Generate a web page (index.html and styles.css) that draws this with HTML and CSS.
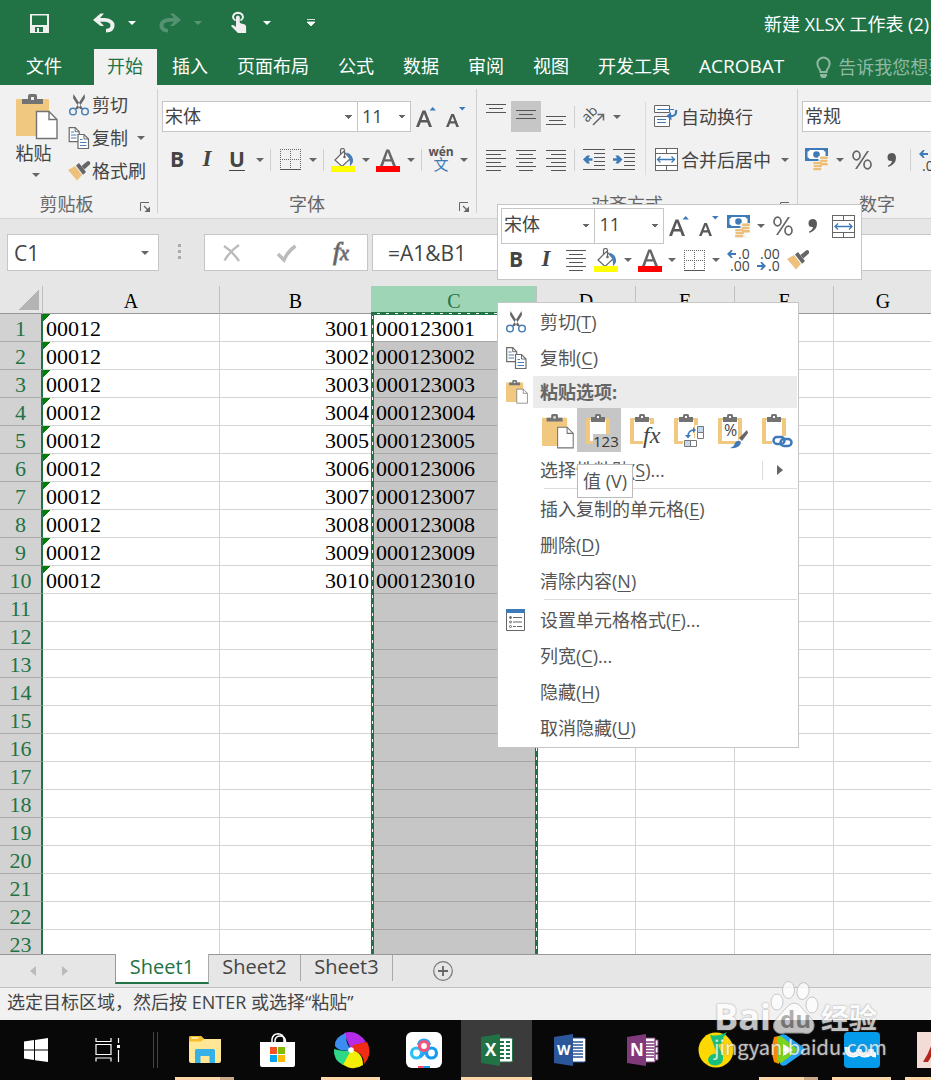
FILE: index.html
```html
<!DOCTYPE html>
<html lang="zh-CN">
<head>
<meta charset="utf-8">
<title>新建 XLSX 工作表 (2) - Excel</title>
<link rel="stylesheet" href="styles.css">
</head>
<body>
<svg class="defs" aria-hidden="true">
  <symbol id="paste" viewBox="0 0 42 46">
    <rect y="5" width="33" height="37" rx="1" fill="#f0c880"/>
    <path d="M6 10V5h6V2q0-2 2-2h5q2 0 2 2v3h6v5z" fill="#737373"/><rect x="15" y="3" width="3" height="3" fill="#f0f0f0"/>
    <path d="M20.500 17.500h12.500l8 8v19h-20.500z" fill="#fff" stroke="#737373" stroke-width="1.400"/><path d="M33 17.500v8h8" fill="none" stroke="#737373" stroke-width="1.400"/>
  </symbol>
  <symbol id="cut" viewBox="0 0 20 22">
    <path d="M4.500 0L14 15h-3L4 4zM15.500 0L6 15h3L16 4z" fill="#666"/>
    <circle cx="4" cy="17.500" r="3.300" fill="none" stroke="#4a7fb5" stroke-width="1.500"/><circle cx="16" cy="17.500" r="3.300" fill="none" stroke="#4a7fb5" stroke-width="1.500"/>
  </symbol>
  <symbol id="copy" viewBox="0 0 21 22">
    <path d="M.7.700h6l4 4v10H.7z" fill="#fff" stroke="#6a6a6a" stroke-width="1.200"/><path d="M6.700.700v4h4" fill="none" stroke="#6a6a6a"/><path d="M2.500 5h3M2.500 8h5.500M2.500 11h5.500" fill="none" stroke="#4a7fb5"/>
    <path d="M9.500 7.500h6l4.500 4.500v9.500H9.500z" fill="#fff" stroke="#6a6a6a" stroke-width="1.200"/><path d="M15.500 7.500v4.500H20" fill="none" stroke="#6a6a6a"/><path d="M11.500 12.500h2.500M11.500 15.500h6.500M11.500 18.500h6.500" stroke="#4a7fb5"/>
  </symbol>
  <symbol id="brush" viewBox="0 0 22 20">
    <path d="M0 9l7-4 7 9-5 5.500z" fill="#edc17c"/><path d="M8 4.500l3-2.500 7 9-3 2.700z" fill="#666"/><path d="M13.500 5L19 .500q1.700-1 2.800.500t-.3 2.800L16.300 8.500z" fill="#666"/>
  </symbol>
  <symbol id="growfont" viewBox="0 0 20 22"><path d="M0 21L6.500 4.500h3L16 21h-3l-1.700-4.500H4.700L3 21zM5.600 14h4.800L8 7.500z" fill="#595959"/><path d="M13.500 4.500L16.700 1l3.200 3.500z" fill="#3f7ab8"/></symbol>
  <symbol id="shrinkfont" viewBox="0 0 20 22"><path d="M0 21L5.300 8h2.600L13 21h-2.700L9 17.500H4L2.600 21zM4.700 15.200h3.700L6.600 10.500z" fill="#595959"/><path d="M13 1h6.600l-3.300 3.500z" fill="#3f7ab8"/></symbol>
  <symbol id="border" viewBox="0 0 21 21"><path d="M.5 0v20M20.500 0v20M10.500 0v20M0 .5h21M0 10.500h21" stroke="#666" stroke-dasharray="1 1" shape-rendering="crispEdges"/><path d="M0 20.500h21" stroke="#555" shape-rendering="crispEdges"/></symbol>
  <symbol id="fill" viewBox="0 0 24 24">
    <path d="M4 12L12.500 3.500l7 7L11 18.500z" fill="#fff" stroke="#666" stroke-width="1.200"/><path d="M9.500 7V2.500q0-2 2-2t2 2V8" fill="none" stroke="#666" stroke-width="1.200"/><circle cx="13.500" cy="9" r="1.300" fill="#666"/>
    <path d="M15.500 4.500q7 2 6.500 9.500l-2.500 4q-1-1-.5-4-.5-4-3.500-7z" fill="#4a7fb5"/><rect y="18" width="24" height="6" fill="#ff0"/>
  </symbol>
  <symbol id="fontcolor" viewBox="0 0 24 24"><path d="M4 18L10.300 1.500h2.900L20 18h-3l-1.700-4.500H8.500L7 18zM9.300 11.200h5.100L11.800 4z" fill="#666"/><rect y="18" width="24" height="6" fill="red"/></symbol>
  <symbol id="center" viewBox="0 0 20 22"><path d="M0 1.500h20M3 5.500h14M0 9.500h20M3 13.500h14M0 17.500h20M3 21.500h14" stroke="#555" shape-rendering="crispEdges"/></symbol>
  <symbol id="left" viewBox="0 0 20 22"><path d="M0 1.500h20M0 5.500h15M0 9.500h20M0 13.500h15M0 17.500h20M0 21.500h15" stroke="#555" shape-rendering="crispEdges"/></symbol>
  <symbol id="right" viewBox="0 0 20 22"><path d="M0 1.500h20M5 5.500h15M0 9.500h20M5 13.500h15M0 17.500h20M5 21.500h15" stroke="#555" shape-rendering="crispEdges"/></symbol>
  <symbol id="indent" viewBox="0 0 23 22"><path d="M0 .5h22M11 4.500h11M11 8.500h11M11 12.500h11M11 16.500h11M0 20.500h22" stroke="#555" shape-rendering="crispEdges"/><path d="M0 9.200h4L2.500 6.500h3l4 4-4 4h-3L4 11.800H0z" fill="#3f7ab8"/></symbol>
  <symbol id="outdent" viewBox="0 0 23 22"><path d="M0 .5h22M11 4.500h11M11 8.500h11M11 12.500h11M11 16.500h11M0 20.500h22" stroke="#555" shape-rendering="crispEdges"/><path d="M9.500 9.200h-4L7 6.500H4l-4 4 4 4h3l-1.500-2.700h4z" fill="#3f7ab8"/></symbol>
  <symbol id="merge" viewBox="0 0 23 23"><path d="M.5.500h22v22H.5zM.5 5.500h22M.5 17.500h22M11.500.500v5M11.500 17.500v5" fill="#fff" stroke="#666" shape-rendering="crispEdges"/><path d="M3 11.500h17M6 8.500l-3 3 3 3M17 8.500l3 3-3 3" fill="none" stroke="#3f7ab8" stroke-width="1.300"/></symbol>
  <symbol id="wrap" viewBox="0 0 24 23"><path d="M.5.500h15v7H.5zM.5 11.500h15v10H.5z" fill="#fff" stroke="#666"/><path d="M3 4.500h17M3 14.500h9M3 17.500h9" stroke="#3f7ab8"/><path d="M22 5q1 7-7 6" fill="none" stroke="#3f7ab8" stroke-width="2.200"/><path d="M17 7l-4.500 4 5 4.500z" fill="#3f7ab8"/></symbol>
  <symbol id="money" viewBox="0 0 24 23"><rect width="23" height="13" fill="#3f7ab8"/><path d="M2.500 3.500q2 0 2-1.500h14q0 1.500 2 1.500v6q-2 0-2 1.500h-14q0-1.500-2-1.500z" fill="#fff"/><circle cx="11.500" cy="6.500" r="3.300" fill="#3f7ab8"/><path d="M13.500 8h10v10h-4v5h-12v-8h6z" fill="#f5f5f5"/><g fill="#ecbf78"><rect x="15" y="8.500" width="8" height="2.500" rx="1.200"/><rect x="14.500" y="11.700" width="8" height="2.500" rx="1.200"/><rect x="15" y="14.900" width="8" height="2.500" rx="1.200"/><rect x="8" y="14" width="8.500" height="2.300" rx="1.100"/><rect x="8.500" y="17" width="8.500" height="2.300" rx="1.100"/><rect x="8" y="20" width="8.500" height="2.300" rx="1.100"/></g></symbol>
  <symbol id="percent" viewBox="0 0 20 20"><path d="M15 1h2L5 19H3z" fill="#666"/><ellipse cx="4.500" cy="5.500" rx="3.500" ry="4.300" fill="none" stroke="#666" stroke-width="1.700"/><ellipse cx="15.500" cy="14.500" rx="3.500" ry="4.300" fill="none" stroke="#666" stroke-width="1.700"/></symbol>
  <symbol id="comma" viewBox="0 0 10 14"><path d="M4.500 0Q9 0 9 5 9 11 1.500 14l-.5-1.500q3.500-1.500 4-4.500Q.5 8.500.5 4.200.500.500 4.500 0z" fill="#595959"/></symbol>
  <symbol id="arrowl" viewBox="0 0 9 8"><path d="M9 3H4l1.700-3H4L0 4l4 4h1.700L4 5h5z" fill="#3f7ab8"/></symbol>
  <symbol id="launch" viewBox="0 0 10 10"><path d="M.5 9V.5H9" fill="none" stroke="#666"/><path d="M4 4l4 4" stroke="#666" stroke-width="1.300"/><path d="M10 4.500V10H4.500z" fill="#666"/></symbol>
  <symbol id="board" viewBox="0 0 24 31"><rect y="4" width="24" height="26" rx="1" fill="#f0c880"/><path d="M4 6h16v21H4z" fill="#fff"/><path d="M5 8V3h4V1.500Q9 0 10.500 0h3Q15 0 15 1.500V3h4v5z" fill="#737373"/><rect x="11" y="2" width="2" height="2" fill="#fff"/></symbol>
</svg>

<div class="app">
  <header class="titlebar">
    <div class="qat">
      <button class="q-save" aria-label="保存"><svg width="19" height="19"><path fill-rule="evenodd" d="M0 0h19v19H0zM2 1.500v9.500h15V1.500zM5 13v5h2v-4h2v4h4v-5z" fill="#f0f0f0"/></svg></button>
      <button aria-label="撤消"><svg width="22" height="20"><path d="M0 7L7.500.500h3.500L7 5h5q9.500 1 9.500 7.500T13 19.500V16q4.500-.5 4.500-3.500T12 8.800H7l4 4.200H7.500z" fill="#f0f0f0"/></svg><i class="tri"></i></button>
      <button class="dim" aria-label="恢复"><svg width="22" height="20"><path d="M22 7L14.500.500H11L15 5h-5Q.5 6 .5 12.500T9 19.500V16q-4.500-.5-4.500-3.500T10 8.800h5L11 13h3.500z" fill="#f0f0f0"/></svg><i class="tri"></i></button>
      <button class="q-touch" aria-label="触摸/鼠标模式"><svg width="18" height="22"><path d="M5.500 8.500Q3 7 3 5q.5-4 5-4.200Q12.500 1 13 5q0 2-2.500 3.500" fill="none" stroke="#f0f0f0" stroke-width="2"/><path d="M6 15V5.200q.2-1.700 1.900-1.700t1.900 1.700V11l5 1.500q1.500.8 1.300 2.500V21H8l-7-7q1.500-2.500 5 1z" fill="#f0f0f0"/></svg><i class="tri"></i></button>
      <button class="q-more" aria-label="自定义快速访问工具栏"><svg width="8" height="8"><path d="M0 .5h8M0 3l8 0-4 4z" fill="#fff" stroke="#fff" stroke-width=".8"/></svg></button>
    </div>
    <h1 class="doc">新建 XLSX 工作表 (2) - Excel</h1>
  </header>
  <nav class="tabs">
    <button class="file">文件</button><button class="on">开始</button><button>插入</button><button>页面布局</button><button>公式</button><button>数据</button><button>审阅</button><button>视图</button><button>开发工具</button><button class="latin">ACROBAT</button>
    <button class="tell"><svg width="15" height="22"><path d="M4.500 16Q4.500 14 2.500 11.500 0 7 3 3.500q4.500-4 9 0 3 3.500.5 8-2 2.500-2 4.500z" fill="none" stroke="currentColor" stroke-width="2"/><path d="M4 18h7v1.500L9.500 22h-4L4 19.500z" fill="currentColor"/></svg>告诉我您想要做什么</button>
  </nav>

  <section class="ribbon">
    <div class="group clip">
      <div class="body">
        <button class="big"><svg width="42" height="46"><use href="#paste"/></svg><span>粘贴</span><i class="tri"></i></button>
        <div class="stack">
          <button><svg width="20" height="22"><use href="#cut"/></svg>剪切</button>
          <button><svg width="21" height="22"><use href="#copy"/></svg>复制<i class="tri"></i></button>
          <button><svg width="22" height="20"><use href="#brush"/></svg>格式刷</button>
        </div>
      </div>
      <div class="label"><span>剪贴板</span><button aria-label="剪贴板设置"><svg width="10" height="10"><use href="#launch"/></svg></button></div>
    </div>
    <div class="group font">
      <div class="body rows">
        <div class="row">
          <select class="face" aria-label="字体"><option>宋体</option></select><select class="size" aria-label="字号"><option>11</option></select>
          <button class="ib" aria-label="增大字号"><svg width="20" height="22"><use href="#growfont"/></svg></button><button class="ib" aria-label="减小字号"><svg width="20" height="22"><use href="#shrinkfont"/></svg></button>
        </div>
        <div class="row">
          <button class="ib b">B</button><button class="ib i">I</button><button class="ib u">U</button><button class="dd" aria-label="下划线选项"></button><i class="sep"></i>
          <button class="ib" aria-label="边框"><svg width="21" height="21"><use href="#border"/></svg></button><button class="dd" aria-label="边框选项"></button><i class="sep"></i>
          <button class="ib" aria-label="填充颜色"><svg width="24" height="24"><use href="#fill"/></svg></button><button class="dd" aria-label="填充颜色选项"></button><button class="ib" aria-label="字体颜色"><svg width="24" height="24"><use href="#fontcolor"/></svg></button><button class="dd" aria-label="字体颜色选项"></button><i class="sep"></i>
          <button class="ib wen"><b>wén</b><span>文</span></button><button class="dd" aria-label="拼音选项"></button>
        </div>
      </div>
      <div class="label"><span>字体</span><button aria-label="字体设置"><svg width="10" height="10"><use href="#launch"/></svg></button></div>
    </div>
    <div class="group align">
      <div class="body">
        <div class="rows">
          <div class="row">
            <button class="ib" aria-label="顶端对齐"><svg width="20" height="31"><path d="M0 3.500h20M3 7.500h14M0 11.500h20" stroke="#555" shape-rendering="crispEdges"/></svg></button><button class="ib on" aria-label="垂直居中"><svg width="20" height="31"><path d="M0 9.500h20M3 13.500h14M0 17.500h20" stroke="#555" shape-rendering="crispEdges"/></svg></button><button class="ib" aria-label="底端对齐"><svg width="20" height="31"><path d="M0 15.500h20M3 19.500h14M0 23.500h20" stroke="#555" shape-rendering="crispEdges"/></svg></button><i class="sep"></i>
            <button class="ib" aria-label="方向"><svg width="22" height="20"><text x="4" y="16" transform="rotate(-45 4 16)" class="ab">ab</text><path d="M10 18L20 8M14.500 7.500h6V13.500" fill="none" stroke="#666" stroke-width="1.500"/></svg></button><button class="dd" aria-label="方向选项"></button>
          </div>
          <div class="row">
            <button class="ib" aria-label="左对齐"><svg width="20" height="22"><use href="#left"/></svg></button><button class="ib" aria-label="居中"><svg width="20" height="22"><use href="#center"/></svg></button><button class="ib" aria-label="右对齐"><svg width="20" height="22"><use href="#right"/></svg></button><i class="sep"></i>
            <button class="ib" aria-label="减少缩进量"><svg width="23" height="22"><use href="#outdent"/></svg></button><button class="ib" aria-label="增加缩进量"><svg width="23" height="22"><use href="#indent"/></svg></button>
          </div>
        </div>
        <i class="tallsep"></i>
        <div class="rows wide">
          <button class="row"><svg width="24" height="23"><use href="#wrap"/></svg>自动换行</button>
          <button class="row"><svg width="24" height="23"><use href="#merge"/></svg>合并后居中<i class="tri"></i></button>
        </div>
      </div>
      <div class="label"><span>对齐方式</span><button aria-label="对齐设置"><svg width="10" height="10"><use href="#launch"/></svg></button></div>
    </div>
    <div class="group number">
      <div class="body rows">
        <div class="row"><select class="format" aria-label="数字格式"><option>常规</option></select></div>
        <div class="row">
          <button class="ib" aria-label="会计数字格式"><svg width="24" height="23"><use href="#money"/></svg></button><button class="dd" aria-label="会计格式选项"></button><button class="ib" aria-label="百分比样式"><svg width="20" height="20"><use href="#percent"/></svg></button><button class="ib" aria-label="千位分隔样式"><svg width="10" height="16"><use href="#comma"/></svg></button><i class="sep"></i>
          <button class="ib" aria-label="增加小数位数"><svg width="23" height="22" class="dec"><use href="#arrowl" y="1" width="9" height="8"/><text x="11" y="10">.0</text><text x="3" y="22">.00</text></svg></button>
        </div>
      </div>
      <div class="label"><span>数字</span></div>
    </div>
  </section>

  <section class="formula">
    <div class="namebox"><input value="C1" aria-label="名称框"><button class="dd" aria-label="名称列表"></button></div>
    <svg class="dots" width="4" height="16"><path d="M0 0h3v3H0zM0 6h3v3H0zM0 12h3v3H0z" fill="#aaa"/></svg>
    <div class="fxbox">
      <button aria-label="取消"><svg width="18" height="18"><path d="M1 2q8 5 15 15M16 1Q7 7 1.500 16.500" fill="none" stroke="#bbb" stroke-width="2.400"/></svg></button>
      <button aria-label="输入"><svg width="20" height="18"><path d="M1 10l6 6Q11 7 18.500 2" fill="none" stroke="#bbb" stroke-width="3.400"/></svg></button>
      <button class="fx" aria-label="插入函数">f<small>x</small></button>
    </div>
    <input class="expr" value="=A1&amp;B1" aria-label="编辑栏">
  </section>

  <main class="grid">
    <table>
      <colgroup><col class="c0"><col class="ca"><col class="cb"><col class="cc"><col class="cd"><col class="cd"><col class="cd"><col class="cd"></colgroup>
      <thead><tr><th class="corner"></th><th>A</th><th>B</th><th class="sel">C</th><th>D</th><th>E</th><th>F</th><th>G</th></tr></thead>
      <tbody>
        <tr><th>1</th><td class="e">00012</td><td class="n">3001</td><td class="cur">000123001</td><td></td><td></td><td></td><td></td></tr>
        <tr><th>2</th><td class="e">00012</td><td class="n">3002</td><td>000123002</td><td></td><td></td><td></td><td></td></tr>
        <tr><th>3</th><td class="e">00012</td><td class="n">3003</td><td>000123003</td><td></td><td></td><td></td><td></td></tr>
        <tr><th>4</th><td class="e">00012</td><td class="n">3004</td><td>000123004</td><td></td><td></td><td></td><td></td></tr>
        <tr><th>5</th><td class="e">00012</td><td class="n">3005</td><td>000123005</td><td></td><td></td><td></td><td></td></tr>
        <tr><th>6</th><td class="e">00012</td><td class="n">3006</td><td>000123006</td><td></td><td></td><td></td><td></td></tr>
        <tr><th>7</th><td class="e">00012</td><td class="n">3007</td><td>000123007</td><td></td><td></td><td></td><td></td></tr>
        <tr><th>8</th><td class="e">00012</td><td class="n">3008</td><td>000123008</td><td></td><td></td><td></td><td></td></tr>
        <tr><th>9</th><td class="e">00012</td><td class="n">3009</td><td>000123009</td><td></td><td></td><td></td><td></td></tr>
        <tr><th>10</th><td class="e">00012</td><td class="n">3010</td><td>000123010</td><td></td><td></td><td></td><td></td></tr>
        <tr><th>11</th><td></td><td></td><td></td><td></td><td></td><td></td><td></td></tr>
        <tr><th>12</th><td></td><td></td><td></td><td></td><td></td><td></td><td></td></tr>
        <tr><th>13</th><td></td><td></td><td></td><td></td><td></td><td></td><td></td></tr>
        <tr><th>14</th><td></td><td></td><td></td><td></td><td></td><td></td><td></td></tr>
        <tr><th>15</th><td></td><td></td><td></td><td></td><td></td><td></td><td></td></tr>
        <tr><th>16</th><td></td><td></td><td></td><td></td><td></td><td></td><td></td></tr>
        <tr><th>17</th><td></td><td></td><td></td><td></td><td></td><td></td><td></td></tr>
        <tr><th>18</th><td></td><td></td><td></td><td></td><td></td><td></td><td></td></tr>
        <tr><th>19</th><td></td><td></td><td></td><td></td><td></td><td></td><td></td></tr>
        <tr><th>20</th><td></td><td></td><td></td><td></td><td></td><td></td><td></td></tr>
        <tr><th>21</th><td></td><td></td><td></td><td></td><td></td><td></td><td></td></tr>
        <tr><th>22</th><td></td><td></td><td></td><td></td><td></td><td></td><td></td></tr>
        <tr><th>23</th><td></td><td></td><td></td><td></td><td></td><td></td><td></td></tr>
      </tbody>
    </table>
    <div class="marquee"></div>
  </main>

  <nav class="sheets">
    <div class="nav"><button aria-label="上一个工作表"><svg width="6" height="10"><path d="M6 0v10L0 5z" fill="#bbb"/></svg></button><button aria-label="下一个工作表"><svg width="6" height="10"><path d="M0 0v10l6-5z" fill="#bbb"/></svg></button></div>
    <button class="sheet on">Sheet1</button><button class="sheet">Sheet2</button><button class="sheet">Sheet3</button>
    <button class="add" aria-label="新工作表"><svg width="20" height="20"><circle cx="10" cy="10" r="9.300" fill="none" stroke="#777" stroke-width="1.200"/><path d="M10 5v10M5 10h10" stroke="#666" stroke-width="1.800"/></svg></button>
  </nav>
  <footer class="status">选定目标区域，然后按 ENTER 或选择“粘贴”</footer>

  <nav class="taskbar">
    <button aria-label="开始菜单"><svg width="24" height="24"><path d="M0 3.500l10-1.400V11.500H0zM11 2l13-2v11.500H11zM0 12.500h10v9.500L0 20.500zM11 12.500h13V24l-13-1.800z" fill="#fff"/></svg></button>
    <button aria-label="任务视图"><svg width="26" height="24"><path d="M1 0v3.500h15V0M1 6.500h15v10H1zM1 23.500V20h15v3.500M23.500 0v5M23.500 12v12" fill="none" stroke="#fff" stroke-width="1.200"/><rect x="22" y="7" width="3" height="3" fill="#fff"/></svg></button>
    <i class="tasksep"></i>
    <button class="run two" aria-label="文件资源管理器"><svg width="32" height="28"><path d="M0 2q0-2 2-2h10l3 3h17v22q0 2-2 2H2q-2 0-2-2z" fill="#ffe796"/><path d="M0 2q0-2 2-2h10l3 3-3 2.500H0z" fill="#f5bd27"/><path d="M2.500 2h7" stroke="#fff" stroke-width="1.200"/><path d="M6 27V14.500q0-1.500 1.500-1.500h17q1.500 0 1.500 1.500V27h-5.500v-7h-9v7z" fill="#35b1e8"/></svg></button>
    <button aria-label="应用商店"><svg width="36" height="34"><path d="M12 13V6q1-5 6-5.200Q23 1 24 6v7M15 12V7q1-4 5-4 5 0 5.500 5v4" fill="none" stroke="#fff" stroke-width="1.500"/><path d="M0 9h35v23q0 2-2 2H2q-2 0-2-2z" fill="#fff"/><path d="M10 14h7v7h-7z" fill="#f35325"/><path d="M18 14h7v7h-7z" fill="#81bc06"/><path d="M10 22h7v7h-7z" fill="#05a6f0"/><path d="M18 22h7v7h-7z" fill="#ffba08"/></svg></button>
    <button class="run" aria-label="浏览器"><svg width="36" height="36" viewBox="-18 -18 36 36"><path d="M0 0L-7-17Q6-21 15-8L3-4z" fill="#b62be8"/><path d="M0 0L2-5 16-8Q22 4 13 14 13 2 0 0z" fill="#f02c14"/><path d="M0 0Q12 2 12 15 2 22-9 14z" fill="#f4ee08"/><path d="M0 0L-8 15Q-18 10-17-1-8 2 0 0z" fill="#2fd887"/><path d="M0 0Q-12 2-16-4-17-13-5-17-6-8 0 0z" fill="#3c8df2"/><circle r="2.800" fill="#fff"/></svg></button>
    <button aria-label="网盘"><svg width="36" height="36"><rect width="36" height="36" rx="6" fill="#fff"/><g fill="none" stroke-width="3.200"><circle cx="10.500" cy="21" r="5" stroke="#2fc0f8"/><circle cx="25.500" cy="21" r="5" stroke="#169bf5"/><path d="M14 25l8-8" stroke="#2aa3f7"/><path d="M12.500 13q1-5 5.500-5t5.500 5" stroke="#2aa3f7"/><circle cx="18" cy="14" r="4.500" stroke="#f4537c"/></g><path d="M12 34h6v2h-6z" fill="#ff4a72"/><path d="M18 34h6v2h-6z" fill="#2196f3"/></svg></button>
    <button class="run full" aria-label="Excel"><svg width="32" height="32"><path d="M17 4h13q1.500 0 1.500 1.500v21q0 1.500-1.500 1.500H17z" fill="#fff" stroke="#217346"/><path d="M19 8h4M19 12h4M19 16h4M19 20h4M19 24h4M25 8h4M25 12h4M25 16h4M25 20h4M25 24h4" stroke="#217346" stroke-width="2"/><path d="M0 3l19-3v32L0 29z" fill="#217346"/><text x="4" y="22" class="ltr">X</text></svg></button>
    <button aria-label="Word"><svg width="32" height="32"><path d="M17 4h13q1.500 0 1.500 1.500v21q0 1.500-1.500 1.500H17z" fill="#fff" stroke="#2b579a"/><path d="M19 8h10M19 11h10M19 14h10M19 17h10M19 20h10M19 23h10" stroke="#2b579a" stroke-width="1.400"/><path d="M0 3l19-3v32L0 29z" fill="#2b579a"/><text x="3" y="21" class="ltr w">W</text></svg></button>
    <button aria-label="OneNote"><svg width="32" height="32"><path d="M17 4h11v24H17zM28 6h3v6h-3zM28 13h3v6h-3zM28 20h3v6h-3z" fill="#fff" stroke="#80397b"/><path d="M19 8h8M19 11h8M19 14h8M19 17h8M19 20h8M19 23h8" stroke="#80397b" stroke-width="1.400"/><path d="M0 3l19-3v32L0 29z" fill="#80397b"/><text x="3" y="22" class="ltr">N</text></svg></button>
    <button aria-label="音乐"><svg width="36" height="36"><circle cx="18" cy="18" r="17.500" fill="#ffd800"/><path d="M12 3q8 2 17-3-4 5-5 10-1 3-4 2.500l5 12q1 8-7 9-8 0-8-6 1-6 9-6z" fill="#15c27c"/></svg></button>
    <button class="run two" aria-label="视频"><svg width="34" height="34"><path d="M2 4l5-1v28l-5-2Q-2 17 2 4z" fill="#ff8a00"/><path d="M7 3q3-3 7-1l17 12q4 3 0 6L14 32q-4 2-6-1z" fill="#20a4f8"/><path d="M5 4q2-2 5 0l14 11q2 2 0 4L9 30q-3 0-4-3z" fill="#7cd31b"/><path d="M11 11l10 6-10 6z" fill="#fff"/></svg></button>
    <button class="run" aria-label="随身WiFi"><svg width="36" height="36"><rect width="36" height="36" rx="4" fill="#049bea"/><path d="M3 15q0 8 6 8t6-6q0 6 6 6t6-6q0 6 5 6" fill="none" stroke="#fff" stroke-width="5"/></svg></button>
    <button class="run" aria-label="Acrobat"><svg width="36" height="36"><rect width="36" height="36" fill="#f3dcd5"/><path d="M6 30Q14 18 17 4h5q3 16 9 26l-6-2q-4-8-6-16-3 10-8 18z" fill="#b3261e"/></svg></button>
  </nav>

  <aside class="mini">
    <div class="row"><select class="face" aria-label="浮动工具栏字体"><option>宋体</option></select><select class="size" aria-label="浮动工具栏字号"><option>11</option></select><button class="ib" aria-label="增大字号"><svg width="20" height="22"><use href="#growfont"/></svg></button><button class="ib" aria-label="减小字号"><svg width="20" height="22"><use href="#shrinkfont"/></svg></button><button class="ib" aria-label="会计数字格式"><svg width="24" height="23"><use href="#money"/></svg></button><button class="dd" aria-label="会计格式选项"></button><button class="ib" aria-label="百分比样式"><svg width="20" height="20"><use href="#percent"/></svg></button><button class="ib" aria-label="千位分隔样式"><svg width="10" height="16"><use href="#comma"/></svg></button><button class="ib" aria-label="合并后居中"><svg width="23" height="23"><use href="#merge"/></svg></button></div>
    <div class="row"><button class="ib b">B</button><button class="ib i">I</button><button class="ib" aria-label="居中"><svg width="20" height="22"><use href="#center"/></svg></button><button class="ib" aria-label="填充颜色"><svg width="24" height="24"><use href="#fill"/></svg></button><button class="dd" aria-label="填充颜色选项"></button><button class="ib" aria-label="字体颜色"><svg width="24" height="24"><use href="#fontcolor"/></svg></button><button class="dd" aria-label="字体颜色选项"></button><button class="ib" aria-label="边框"><svg width="21" height="21"><use href="#border"/></svg></button><button class="dd" aria-label="边框选项"></button><button class="ib" aria-label="增加小数位数"><svg width="23" height="22" class="dec"><use href="#arrowl" y="1" width="9" height="8"/><text x="11" y="10">.0</text><text x="3" y="22">.00</text></svg></button><button class="ib" aria-label="减少小数位数"><svg width="23" height="22" class="dec"><text x="3" y="10">.00</text><use href="#arrowl" x="-9" y="13" width="9" height="8" transform="scale(-1 1)"/><text x="11" y="22">.0</text></svg></button><button class="ib" aria-label="格式刷"><svg width="22" height="20"><use href="#brush"/></svg></button></div>
  </aside>

  <div class="menu" role="menu">
    <button class="item" role="menuitem"><span class="ico"><svg width="20" height="22"><use href="#cut"/></svg></span>剪切(<u>T</u>)</button>
    <button class="item" role="menuitem"><span class="ico"><svg width="21" height="22"><use href="#copy"/></svg></span>复制(<u>C</u>)</button>
    <div class="head"><span class="ico"><svg width="22" height="24"><use href="#paste"/></svg></span><b>粘贴选项:</b></div>
    <div class="opts">
      <button aria-label="粘贴"><svg width="32" height="35"><use href="#paste"/></svg></button>
      <button class="on" aria-label="值"><svg width="32" height="35"><use href="#board" width="24" height="31"/><rect x="7" y="20" width="25" height="15" fill="#c6c6c6"/><text x="7" y="33" class="t123">123</text></svg></button>
      <button aria-label="公式"><svg width="32" height="35"><use href="#board" width="24" height="31"/><path d="M16 10h16v25H12z" fill="#fff"/><text x="13" y="29" class="tfx">fx</text></svg></button>
      <button aria-label="转置"><svg width="32" height="35"><use href="#board" width="24" height="31"/><path d="M21 11h11v24H9V24h12z" fill="#fff"/><path d="M23.500 12.500h6v6h-6zM10.500 26.500h6v6h-6z" fill="#c5d8ec" stroke="#777"/><path d="M23.500 18.500h6v6h-6zM16.500 26.500h6v6h-6z" fill="#fff" stroke="#777"/><path d="M14 23q0-7 6-7" fill="none" stroke="#3f7ab8" stroke-width="1.500"/><path d="M19 13l3 3-3 3zM11 21h6l-3 3.500z" fill="#3f7ab8"/></svg></button>
      <button aria-label="格式"><svg width="32" height="35"><use href="#board" width="24" height="31"/><text x="6" y="22" class="tpc">%</text><path d="M31 14l-11 13-4 5 8-3 7-10z" fill="#fff"/><path d="M29 16l-8 8 3 3 6-8z" fill="#666"/><path d="M12 34q4-1 5-5 3-4 6-1-1 7-11 6z" fill="#3f7ab8"/></svg></button>
      <button aria-label="粘贴链接"><svg width="32" height="35"><use href="#board" width="24" height="31"/><path d="M10 22h22v12H10z" fill="#fff"/><g fill="none" stroke="#3f7ab8" stroke-width="2.500"><rect x="11.500" y="23" width="11" height="7" rx="3.500"/><rect x="18.500" y="25" width="11" height="7" rx="3.500"/></g></svg></button>
    </div>
    <button class="item more" role="menuitem"><span class="ico"></span>选择性粘贴(<u>S</u>)...<span class="sub"><svg width="6" height="10"><path d="M0 0v10l6-5z" fill="#666"/></svg></span></button>
    <hr>
    <button class="item" role="menuitem"><span class="ico"></span>插入复制的单元格(<u>E</u>)</button>
    <button class="item" role="menuitem"><span class="ico"></span>删除(<u>D</u>)</button>
    <button class="item" role="menuitem"><span class="ico"></span>清除内容(<u>N</u>)</button>
    <hr>
    <button class="item" role="menuitem"><span class="ico"><svg width="19" height="22"><path d="M.5.500h18v21H.5z" fill="#fff" stroke="#666"/><path d="M0 0h19v4H0z" fill="#3f7ab8"/><path d="M7 8.500h9M7 13h9M7 17.500h3M11 17.500h5" stroke="#666"/><g fill="none" stroke="#666"><circle cx="4.500" cy="8.500" r="1" fill="#666"/><circle cx="4.500" cy="13" r="1"/><circle cx="4.500" cy="17.500" r="1"/></g></svg></span>设置单元格格式(<u>F</u>)...</button>
    <button class="item" role="menuitem"><span class="ico"></span>列宽(<u>C</u>)...</button>
    <button class="item" role="menuitem"><span class="ico"></span>隐藏(<u>H</u>)</button>
    <button class="item" role="menuitem"><span class="ico"></span>取消隐藏(<u>U</u>)</button>
    <div class="tip" role="tooltip">值 (V)</div>
  </div>

  <div class="mark">
    <div class="logo"><span class="bai">Bai</span><span class="paw"><svg width="50" height="54"><g fill="#fff" stroke="#bbb"><ellipse cx="7" cy="21" rx="6" ry="8"/><ellipse cx="18.500" cy="9" rx="6" ry="8.500"/><ellipse cx="33" cy="10" rx="6" ry="8.500" transform="rotate(12 33 10)"/><ellipse cx="42" cy="24" rx="6" ry="8"/><path d="M24 22q5 0 8 5l9 10q5 6 2 12-3 5-10 3H15q-8 2-11-4-2-6 4-12l8-9q4-5 8-5z"/></g><text x="10" y="47" class="du">du</text></svg></span><span class="jy">经验</span></div>
    <div class="url">jingyan.baidu.com</div>
  </div>
</div>
</body>
</html>
```
FILE: styles.css
```css
* { box-sizing: border-box; }
body {
  margin: 0;
  font: 18px/24px "Open Sans", "Noto Sans CJK SC", sans-serif;
  color: #444;
}
button, input, select {
  margin: 0;
  padding: 0;
  border: 0;
  background: none;
  color: inherit;
  font: inherit;
  white-space: nowrap;
}
svg { display: block; flex: none; overflow: visible; }
.defs { position: absolute; width: 0; height: 0; }
.app {
  position: relative;
  display: flex;
  flex-direction: column;
  height: 100vh;
  overflow: hidden;
  background: #e6e6e6;
}
.tri {
  width: 0;
  height: 0;
  border: 4px solid transparent;
  border-top-color: #666;
  border-bottom: 0;
}

/* title bar and ribbon tabs */
.titlebar {
  display: flex;
  flex: none;
  justify-content: space-between;
  height: 49px;
  padding-left: 30px;
  background: #217346;
  color: #fff;
  overflow: hidden;
}
.qat { display: flex; align-items: center; padding-bottom: 3px; gap: 23px; }
.qat button { display: flex; align-items: center; gap: 13px; }
.qat .q-save { margin-right: 21px; }
.qat .q-touch { gap: 15px; margin-left: 5px; }
.qat .q-more { margin-left: 13px; }
.qat .tri { border-top-color: #fff; }
.qat .dim { opacity: .25; }
.doc {
  flex: none;
  width: 167px;
  margin: 0;
  font-size: 18px;
  line-height: 48px;
  font-weight: 400;
  white-space: nowrap;
}
.tabs {
  display: flex;
  flex: none;
  gap: 2px;
  height: 36px;
  padding-left: 13px;
  background: #217346;
  color: #fff;
}
.tabs button { flex: none; padding: 0 14px 3px 13px; }
.tabs .file { margin-right: 16px; }
.tabs .on { background: #f1f1f1; color: #217346; }
.tabs .latin { font-size: 19px; }
.tabs .tell { display: flex; align-items: center; gap: 7px; color: #90b9a2; padding: 0 0 0 16px; }

/* ribbon */
.ribbon {
  display: flex;
  flex: none;
  height: 134px;
  padding: 4px 0 5px;
  border-bottom: 1px solid #d2d2d2;
  background: #f1f1f1;
}
.group {
  display: flex;
  flex: none;
  flex-direction: column;
  border-right: 1px solid #d0d0d0;
}
.body { display: flex; flex: none; height: 99px; }
.label {
  display: flex;
  height: 25px;
  color: #666;
  line-height: 32px;
  text-align: center;
}
.label span { flex: 1; }
.label button { display: flex; justify-content: center; width: 24px; padding-top: 14px; }
.clip { width: 158px; }
.font { width: 319px; padding-left: 4px; }
.align { width: 321px; padding-left: 4px; }
.number { width: 154px; padding-left: 4px; border: 0; }
.big {
  display: flex;
  flex-direction: column;
  align-items: center;
  width: 62px;
  padding: 5px 0 0 11px;
}
.big svg { margin-bottom: 1px; }
.big span { margin-right: 6px; }
.big .tri { margin-top: 8px; margin-right: 2px; }
.stack button { display: flex; align-items: center; height: 33px; padding: 0 0 1px 4px; }
.stack svg { width: 26px; }
.stack .tri { margin-left: 9px; }
.rows { display: flex; flex-direction: column; gap: 12px; padding-top: 12px; }
.row { display: flex; flex: none; align-items: center; height: 31px; }
.ib {
  display: flex;
  flex: none;
  align-items: center;
  justify-content: center;
  width: 30px;
  height: 31px;
}
.ib.on { background: #c6c6c6; }
.ib.b, .ib.u { padding-bottom: 2px; font-weight: 700; font-size: 21px; }
.ib.i { padding-bottom: 2px; font: italic 700 23px "Liberation Serif", serif; }
.ib.u { text-decoration: underline; text-decoration-thickness: 1px; text-underline-offset: 3px; }
.dd { flex: none; width: 15px; height: 31px; display: flex; align-items: center; justify-content: center; }
.dd::before {
  content: "";
  border: 4px solid transparent;
  border-top-color: #666;
  border-bottom: 0;
}
.sep { flex: none; width: 1px; height: 22px; margin: 0 4px 0 3px; background: #d0d0d0; }
.tallsep { width: 1px; height: 73px; margin: 13px 8px 0 6px; background: #dcdcdc; }
.wen { flex-direction: column; color: #3f7ab8; }
.wen b { color: #555; font-size: 12px; line-height: 10px; }
.wen span { font-size: 15px; line-height: 15px; }
.ab { font: 14px "Open Sans", sans-serif; fill: #555; }
.dec text { font: 14px "Open Sans", sans-serif; fill: #444; }
.wide button { gap: 3px; }
.wide .tri { margin-left: 7px; }
select {
  appearance: none;
  height: 31px;
  padding: 0 0 2px 2px;
  border: 1px solid #c6c6c6;
  background:
    linear-gradient(45deg, transparent 50%, #666 50%) right 8px center / 4px 4px no-repeat,
    linear-gradient(-45deg, transparent 50%, #666 50%) right 4px center / 4px 4px no-repeat,
    #fff;
  background:
    linear-gradient(to bottom left, #666 50%, transparent 50%) right 8px center / 4px 4px no-repeat,
    linear-gradient(to bottom right, #666 50%, transparent 50%) right 4px center / 4px 4px no-repeat,
    #fff;
}
.face { width: 196px; }
.size { width: 54px; margin-left: -1px; }
.format { width: 150px; }
.face + .size { padding-left: 4px; }

/* formula bar */
.formula { display: flex; flex: none; height: 67px; padding: 15px 0 15px 7px; font-size: 21px; }
.namebox, .fxbox, .expr { border: 1px solid #c6c6c6; background: #fff; }
.namebox { display: flex; align-items: center; width: 152px; }
.namebox input { flex: 1; min-width: 0; padding-left: 6px; }
.namebox .dd { width: 26px; }
.dots { margin: 10px 22px 0 19px; }
.fxbox { display: flex; align-items: center; justify-content: space-between; width: 164px; margin-right: 4px; padding: 0 18px; }
.fx { font: italic 26px/28px "Liberation Serif", serif; color: #555; -webkit-text-stroke: 1px #777; }
.fx small { font-size: 20px; }
.expr { flex: 1; min-width: 0; padding-left: 15px; border-right: 0; }

/* worksheet */
.grid { position: relative; flex: 1; min-height: 0; overflow: hidden; background: #fff; }
table {
  table-layout: fixed;
  width: 933px;
  border-spacing: 0;
  font: 22px/24px "Liberation Serif", serif;
  color: #000;
}
.c0 { width: 43px; }
.ca { width: 177px; }
.cb { width: 152px; }
.cc { width: 165px; }
.cd { width: 99px; }
td, th { height: 28px; padding: 3px 3px 0; border-right: 1px solid #d4d4d4; border-bottom: 1px solid #d4d4d4; font-weight: 400; white-space: nowrap; }
thead th { background: #e6e6e6; border-color: #c0c0c0; border-bottom-color: #999; font-size: 20px; }
thead .sel { background: #9fd5b7; color: #217346; }
thead .corner { background: linear-gradient(135deg, transparent 50%, #b4b4b4 50%) 19px 4px / 20px 20px no-repeat #e6e6e6; }
tbody th { padding: 3px 0 0; background: #d2d2d2; color: #217346; border-right: 2px solid #217346; border-bottom-color: #ababab; }
td:nth-child(4) { background: #c6c6c6; border-bottom-color: #a6a6a6; padding-left: 4px; }
td.cur { background: #fff; }
.e { background: linear-gradient(135deg, #008000 50%, transparent 50%) 0 0 / 8px 8px no-repeat; }
.n { padding-right: 2px; text-align: right; }
.marquee {
  position: absolute;
  top: 26px;
  left: 371px;
  bottom: 0;
  width: 167px;
  background:
    repeating-linear-gradient(#fff 0 3px, transparent 3px 9px) 1px 4px / 1px 100% no-repeat,
    repeating-linear-gradient(#fff 0 3px, transparent 3px 9px) 165px 4px / 1px 100% no-repeat,
    repeating-linear-gradient(90deg, #fff 0 3px, transparent 3px 9px) 6px 1px / 100% 1px no-repeat,
    linear-gradient(#217346, #217346) left / 3px 100% no-repeat,
    linear-gradient(#217346, #217346) right / 3px 100% no-repeat,
    linear-gradient(#217346, #217346) top / 100% 3px no-repeat;
}

/* sheet tabs and status bar */
.sheets { display: flex; flex: none; height: 34px; border-top: 1px solid #999; border-bottom: 1px solid #c0c0c0; font-size: 20px; }
.nav { display: flex; align-items: center; gap: 26px; width: 115px; padding-left: 30px; }
.sheet { width: 92px; height: 26px; padding-bottom: 2px; border-right: 1px solid #aaa; }
.sheet.on { width: 94px; height: 30px; margin-top: -1px; padding-bottom: 3px; border-left: 1px solid #999; border-bottom: 2px solid #217346; background: #fff; color: #217346; }
.add { margin-left: 40px; }
.status { flex: none; height: 32px; padding-left: 7px; background: #f1f1f1; line-height: 29px; }

/* taskbar */
.taskbar { display: flex; flex: none; height: 60px; background: #080808; overflow: hidden; }
.taskbar button { display: flex; flex: none; align-items: center; justify-content: center; width: 73px; height: 60px; }
.taskbar button:first-child, .taskbar button:nth-child(2) { width: 72px; }
.taskbar .run { background: linear-gradient(#fcd5a8, #fcd5a8) 50% 100% / 59px 3px no-repeat; }
.taskbar .two { background: linear-gradient(90deg, #fcd5a8 45px, #c9a987 45px) 50% 100% / 59px 3px no-repeat; }
.taskbar .full { background: linear-gradient(#fcd5a8, #fcd5a8) 50% 100% / 71px 3px no-repeat, linear-gradient(#3b3b3b, #3b3b3b) 50% 0 / 71px 100% no-repeat; }
.tasksep { width: 5px; height: 36px; margin: 12px 10px 0 9px; border: 1px solid #444; border-width: 0 1px; flex: none; }
.ltr { font: 700 17px "Open Sans", sans-serif; fill: #fff; }
.ltr.w { font-size: 14px; }

/* floating toolbar */
.mini {
  position: absolute;
  top: 204px;
  left: 497px;
  padding: 3px;
  width: 365px;
  height: 76px;
  border: 1px solid #c6c6c6;
  background: #fff;
}
.mini .row { height: 36px; }
.mini .row + .row { height: 32px; }
.mini .face { width: 95px; height: 36px; padding-bottom: 5px; }
.mini .size { width: 70px; height: 36px; padding-bottom: 5px; }
.mini .dd { width: 14px; }

/* context menu */
.menu {
  position: absolute;
  top: 302px;
  left: 497px;
  width: 302px;
  padding: 1px;
  border: 1px solid #c6c6c6;
  background: #fff;
  color: #555;
}
.item { display: flex; align-items: center; width: 100%; height: 36px; }
.ico { display: flex; flex: none; width: 41px; padding-left: 7px; }
.menu u { text-underline-offset: 3px; text-decoration-thickness: 1px; }
.head { display: flex; align-items: center; height: 32px; background: linear-gradient(90deg, #fff 34px, #ebebeb 34px); color: #666; }
.opts { display: flex; padding-left: 34px; }
.opts button { display: flex; align-items: center; justify-content: center; flex: 1; height: 44px; padding: 2px 0 0 6px; }
.opts .on { background: #c6c6c6; }
.sub { display: flex; align-items: center; height: 19px; margin-left: auto; padding: 0 14px; border-left: 1px solid #dcdcdc; }
.menu hr { height: 3px; margin: 0 0 0 45px; border: 0; border-top: 1px solid #dcdcdc; }
.tip {
  position: absolute;
  top: 161px;
  left: 79px;
  padding: 4px 5px;
  border: 1px solid #bbb;
  background: #fff;
  white-space: nowrap;
}
.t123 { font: 15px "Open Sans", sans-serif; fill: #333; }
.tfx { font: italic 24px "Liberation Serif", serif; fill: #444; }
.tpc { font: 16px "Open Sans", sans-serif; fill: #444; }

/* watermark */
.mark { position: absolute; top: 981px; left: 714px; color: #fff; opacity: .75; pointer-events: none; white-space: nowrap; text-shadow: 0 0 2px #777; }
.logo { display: flex; align-items: flex-end; height: 54px; }
.bai { width: 56px; font: 700 36px/36px "Open Sans", sans-serif; }
.paw { width: 51px; }
.jy { font-weight: 700; font-size: 28px; line-height: 34px; }
.du { font: 700 24px "Open Sans", sans-serif; fill: #999; text-shadow: none; }
.url { font: 20px/24px "Noto Sans CJK SC", sans-serif; }
```
